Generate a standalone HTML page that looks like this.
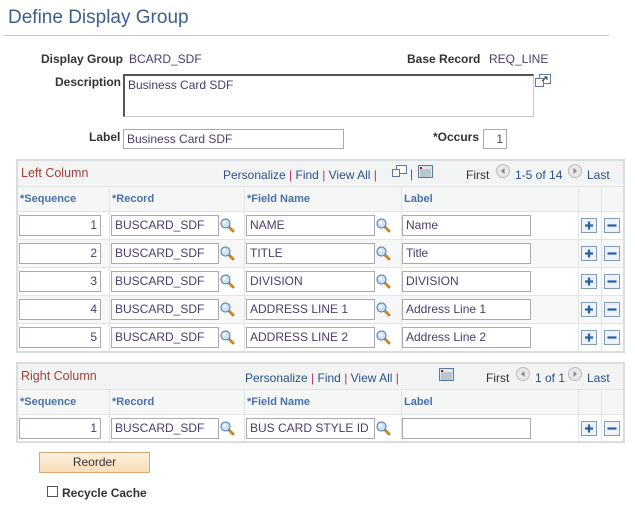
<!DOCTYPE html>
<html><head><meta charset="utf-8"><style>
*{box-sizing:border-box;margin:0;padding:0}
body{width:635px;height:507px;background:#fff;font-family:"Liberation Sans",Arial,sans-serif;font-size:12px;color:#333;position:relative;overflow:hidden}
.a{position:absolute;white-space:nowrap}
.t{font-size:19px;color:#3d5f8f;left:8px;top:7px}
.lb{font-weight:bold;color:#333}
.v{color:#4b3c6e}
.in{position:absolute;border:1px solid #aaa;background:#fff;color:#4b3c6e;font-size:12px;padding:2px 3px;height:21px;line-height:15px;white-space:nowrap;overflow:hidden}
.r{text-align:right}
.grid{position:absolute;left:16px;width:609px;border:2px solid #d8dde0;background:#fff}
.gh{position:absolute;left:0;right:0;top:0;height:26px;background:#f2f4f4;border-bottom:1px solid #e2e5e6}
.gt{position:absolute;left:3px;top:5px;font-size:12.5px;color:#a0413c}
.nav{position:absolute;top:7px;color:#2a4f8a;font-size:12px}
.sep{color:#b03060}
.ch{position:absolute;left:0;right:0;height:25px;background:#f5f6f6;border-bottom:1px solid #e2e5e6}
.chl{position:absolute;top:6px;font-weight:bold;color:#4a70a8;font-size:11px}
.vl{position:absolute;top:26px;bottom:0;width:1px;background:#e2e5e6}
.row{position:absolute;left:0;right:0;height:28px;border-bottom:1px solid #e2e5e6}
.mag{position:absolute;width:15px;height:15px}
.btn{position:absolute;width:16px;height:14px;border:1px solid #7f9db9;background:linear-gradient(#f6f9fc,#dde6ef)}
.btn svg{position:absolute;left:2px;top:1px}
</style></head><body>
<div class="a t">Define Display Group</div>
<div style="position:absolute;left:4px;top:35px;width:605px;height:1px;background:#c4c4c4"></div>

<div class="a lb" style="left:41px;top:52px">Display Group</div>
<div class="a v" style="left:129px;top:52px">BCARD_SDF</div>
<div class="a lb" style="left:407px;top:52px">Base Record</div>
<div class="a v" style="left:489px;top:52px">REQ_LINE</div>

<div class="a lb" style="left:55px;top:75px">Description</div>
<div style="position:absolute;left:123px;top:74px;width:411px;height:43px;border:1px solid #c8c8c0;border-top:2px solid #555;border-left:2px solid #555;padding:2px 3px;color:#4b3c6e">Business Card SDF</div>
<svg class="a" style="left:535px;top:74px" width="16" height="14"><rect x="4.5" y="0.5" width="11" height="9" fill="#fff" stroke="#5a7ba8"/><rect x="0.5" y="4.5" width="8" height="8" fill="#fff" stroke="#5a7ba8"/><path d="M7 7L12 3M9 3h3v3" stroke="#333" fill="none"/></svg>

<div class="a lb" style="left:89px;top:130px">Label</div>
<div class="in" style="left:123px;top:129px;width:221px;height:20px">Business Card SDF</div>
<div class="a lb" style="left:433px;top:130px">*Occurs</div>
<div class="in r" style="left:483px;top:129px;width:24px;height:20px">1</div>

<!-- Left grid -->
<div class="grid" style="top:159px;height:194px">
 <div class="gh"><span class="gt">Left Column</span>
  <span class="nav" style="left:205px">Personalize <span class="sep">|</span> Find <span class="sep">|</span> View All <span class="sep">|</span></span>
  <svg class="a" style="left:374px;top:4px" width="15" height="13"><rect x="4.5" y="0.5" width="10" height="8" fill="#fff" stroke="#5a7ba8"/><rect x="0.5" y="4.5" width="7" height="7" fill="#fff" stroke="#5a7ba8"/></svg>
  <span class="nav" style="left:392px;top:6px;color:#b03060">|</span>
  <svg class="a" style="left:400px;top:4px" width="15" height="13"><rect x="0.5" y="0.5" width="14" height="12" fill="#dfe7f0" stroke="#5a7ba8"/><rect x="2" y="2" width="2" height="2" fill="#d00"/><path d="M2 5h11M2 7h11M2 9h11M2 11h11" stroke="#8aa" /></svg>
  <span class="nav" style="left:448px;color:#333">First</span>
  <svg class="a" style="left:478px;top:3px" width="14" height="14"><circle cx="7" cy="7" r="6.5" fill="#e8e8e8" stroke="#bbb"/><path d="M8.5 4v6L5 7z" fill="#888"/></svg>
  <span class="nav" style="left:497px">1-5 of 14</span>
  <svg class="a" style="left:550px;top:3px" width="14" height="14"><circle cx="7" cy="7" r="6.5" fill="#e8e8e8" stroke="#bbb"/><path d="M5.5 4v6L9 7z" fill="#888"/></svg>
  <span class="nav" style="left:569px">Last</span>
 </div>
 <div class="ch" style="top:26px">
  <span class="chl" style="left:2px">*Sequence</span><span class="chl" style="left:94px">*Record</span><span class="chl" style="left:229px">*Field Name</span><span class="chl" style="left:386px">Label</span>
 </div>
 <div class="vl" style="left:91px"></div><div class="vl" style="left:226px"></div><div class="vl" style="left:383px"></div><div class="vl" style="left:560px"></div><div class="vl" style="left:583px"></div>
 <div class="row" style="top:51px"></div>
 <div class="row" style="top:79px;background:#f7f7f7"></div>
 <div class="row" style="top:107px"></div>
 <div class="row" style="top:135px;background:#f7f7f7"></div>
 <div class="row" style="top:163px;border-bottom:none"></div>
 <div class="vl" style="left:91px"></div><div class="vl" style="left:226px"></div><div class="vl" style="left:383px"></div><div class="vl" style="left:560px"></div><div class="vl" style="left:583px"></div>
</div>

<!-- rows left grid: top offsets 215,243,271,299,327 -->
<div class="in r" style="left:19px;top:215px;width:82px">1</div>
<div class="in" style="left:111px;top:215px;width:108px">BUSCARD_SDF</div>
<div class="in" style="left:246px;top:215px;width:129px">NAME</div>
<div class="in" style="left:402px;top:215px;width:129px">Name</div>

<div class="in r" style="left:19px;top:243px;width:82px">2</div>
<div class="in" style="left:111px;top:243px;width:108px">BUSCARD_SDF</div>
<div class="in" style="left:246px;top:243px;width:129px">TITLE</div>
<div class="in" style="left:402px;top:243px;width:129px">Title</div>

<div class="in r" style="left:19px;top:271px;width:82px">3</div>
<div class="in" style="left:111px;top:271px;width:108px">BUSCARD_SDF</div>
<div class="in" style="left:246px;top:271px;width:129px">DIVISION</div>
<div class="in" style="left:402px;top:271px;width:129px">DIVISION</div>

<div class="in r" style="left:19px;top:299px;width:82px">4</div>
<div class="in" style="left:111px;top:299px;width:108px">BUSCARD_SDF</div>
<div class="in" style="left:246px;top:299px;width:129px">ADDRESS LINE 1</div>
<div class="in" style="left:402px;top:299px;width:129px">Address Line 1</div>

<div class="in r" style="left:19px;top:327px;width:82px">5</div>
<div class="in" style="left:111px;top:327px;width:108px">BUSCARD_SDF</div>
<div class="in" style="left:246px;top:327px;width:129px">ADDRESS LINE 2</div>
<div class="in" style="left:402px;top:327px;width:129px">Address Line 2</div>

<!-- Right grid -->
<div class="grid" style="top:362px;height:81px">
 <div class="gh"><span class="gt">Right Column</span>
  <span class="nav" style="left:227px">Personalize <span class="sep">|</span> Find <span class="sep">|</span> View All <span class="sep">|</span></span>
  <svg class="a" style="left:421px;top:4px" width="15" height="13"><rect x="0.5" y="0.5" width="14" height="12" fill="#dfe7f0" stroke="#5a7ba8"/><rect x="2" y="2" width="2" height="2" fill="#d00"/><path d="M2 5h11M2 7h11M2 9h11M2 11h11" stroke="#8aa"/></svg>
  <span class="nav" style="left:468px;color:#333">First</span>
  <svg class="a" style="left:498px;top:3px" width="14" height="14"><circle cx="7" cy="7" r="6.5" fill="#e8e8e8" stroke="#bbb"/><path d="M8.5 4v6L5 7z" fill="#888"/></svg>
  <span class="nav" style="left:517px">1 of 1</span>
  <svg class="a" style="left:550px;top:3px" width="14" height="14"><circle cx="7" cy="7" r="6.5" fill="#e8e8e8" stroke="#bbb"/><path d="M5.5 4v6L9 7z" fill="#888"/></svg>
  <span class="nav" style="left:569px">Last</span>
 </div>
 <div class="ch" style="top:26px">
  <span class="chl" style="left:2px">*Sequence</span><span class="chl" style="left:94px">*Record</span><span class="chl" style="left:229px">*Field Name</span><span class="chl" style="left:386px">Label</span>
 </div>
 <div class="vl" style="left:91px"></div><div class="vl" style="left:226px"></div><div class="vl" style="left:383px"></div><div class="vl" style="left:560px"></div><div class="vl" style="left:583px"></div>
</div>
<div class="in r" style="left:19px;top:418px;width:82px">1</div>
<div class="in" style="left:111px;top:418px;width:108px">BUSCARD_SDF</div>
<div class="in" style="left:246px;top:418px;width:129px">BUS CARD STYLE ID</div>
<div class="in" style="left:402px;top:418px;width:129px"></div>

<div id="icons"></div>

<!-- magnifiers & buttons -->
<svg class="a" style="left:0;top:0" width="635" height="507">
 <defs>
  <g id="m"><path d="M8.5 8.5L13 13" stroke="#c8862a" stroke-width="3" stroke-linecap="round"/><circle cx="5.5" cy="5.5" r="4.5" fill="#cfe3f5" stroke="#5b8cc0" stroke-width="1.2"/><circle cx="4.5" cy="4.5" r="1.5" fill="#fff" opacity=".8"/></g>
  <g id="p"><rect x="0.5" y="0.5" width="15" height="14" fill="#eef3f8" stroke="#7f9db9"/><path d="M8 3.5v8M4 7.5h8" stroke="#2a5ea8" stroke-width="2.2"/></g>
  <g id="n"><rect x="0.5" y="0.5" width="15" height="14" fill="#eef3f8" stroke="#7f9db9"/><path d="M3.5 7.5h9" stroke="#2a5ea8" stroke-width="2.2"/></g>
 </defs>
 <use href="#m" x="220" y="218"/><use href="#m" x="376" y="218"/><use href="#p" x="581" y="218"/><use href="#n" x="604" y="218"/>
 <use href="#m" x="220" y="246"/><use href="#m" x="376" y="246"/><use href="#p" x="581" y="246"/><use href="#n" x="604" y="246"/>
 <use href="#m" x="220" y="274"/><use href="#m" x="376" y="274"/><use href="#p" x="581" y="274"/><use href="#n" x="604" y="274"/>
 <use href="#m" x="220" y="302"/><use href="#m" x="376" y="302"/><use href="#p" x="581" y="302"/><use href="#n" x="604" y="302"/>
 <use href="#m" x="220" y="330"/><use href="#m" x="376" y="330"/><use href="#p" x="581" y="330"/><use href="#n" x="604" y="330"/>
 <use href="#m" x="220" y="421"/><use href="#m" x="376" y="421"/><use href="#p" x="581" y="421"/><use href="#n" x="604" y="421"/>
</svg>

<div style="position:absolute;left:39px;top:452px;width:111px;height:21px;border:1px solid #d8a870;background:linear-gradient(#fdf1e0,#f8dcb6);text-align:center;line-height:19px;color:#333;font-size:12px">Reorder</div>
<div style="position:absolute;left:47px;top:486px;width:11px;height:11px;border:1px solid #555;background:#fff"></div>
<div class="a lb" style="left:62px;top:486px">Recycle Cache</div>
</body></html>
